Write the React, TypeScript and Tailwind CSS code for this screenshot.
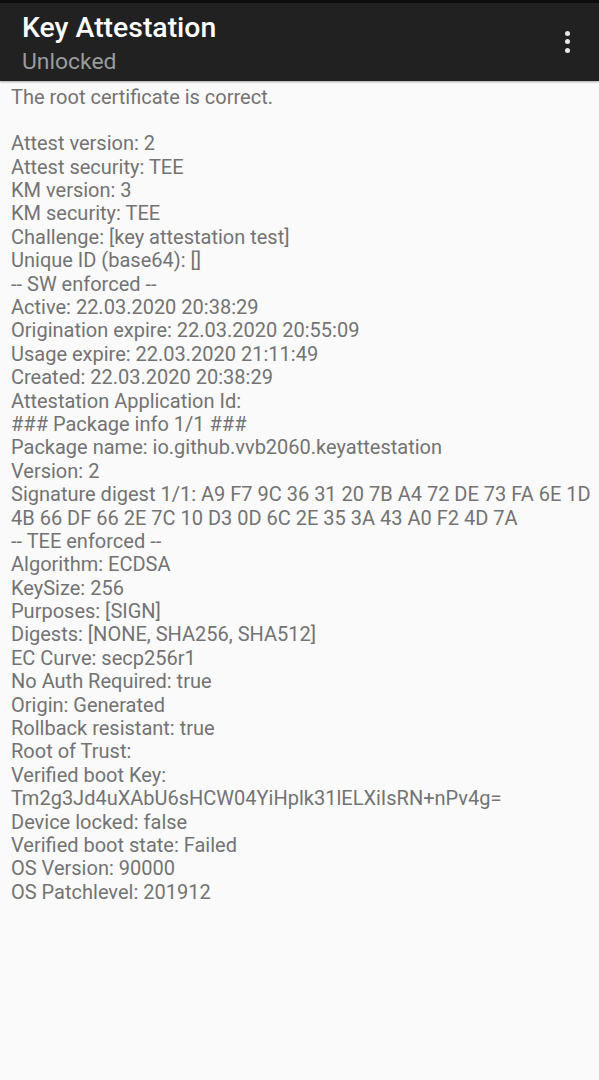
import React from 'react';

const lines: string[] = [
  'The root certificate is correct.',
  '',
  'Attest version: 2',
  'Attest security: TEE',
  'KM version: 3',
  'KM security: TEE',
  'Challenge: [key attestation test]',
  'Unique ID (base64): []',
  '-- SW enforced --',
  'Active: 22.03.2020 20:38:29',
  'Origination expire: 22.03.2020 20:55:09',
  'Usage expire: 22.03.2020 21:11:49',
  'Created: 22.03.2020 20:38:29',
  'Attestation Application Id:',
  '### Package info 1/1 ###',
  'Package name: io.github.vvb2060.keyattestation',
  'Version: 2',
  'Signature digest 1/1: A9 F7 9C 36 31 20 7B A4 72 DE 73 FA 6E 1D',
  '4B 66 DF 66 2E 7C 10 D3 0D 6C 2E 35 3A 43 A0 F2 4D 7A',
  '-- TEE enforced --',
  'Algorithm: ECDSA',
  'KeySize: 256',
  'Purposes: [SIGN]',
  'Digests: [NONE, SHA256, SHA512]',
  'EC Curve: secp256r1',
  'No Auth Required: true',
  'Origin: Generated',
  'Rollback resistant: true',
  'Root of Trust:',
  'Verified boot Key:',
  'Tm2g3Jd4uXAbU6sHCW04YiHplk31lELXiIsRN+nPv4g=',
  'Device locked: false',
  'Verified boot state: Failed',
  'OS Version: 90000',
  'OS Patchlevel: 201912',
];

const App: React.FC = () => {
  return (
    <div className="min-h-[1080px] bg-[#fafafa]" style={{ fontFamily: 'Roboto, "Noto Sans", sans-serif' }}>
      {/* status bar strip */}
      <div className="h-[3px] bg-[#0d0d0d]" />

      {/* toolbar */}
      <div className="relative flex h-[78px] items-start justify-between bg-[#212121] pl-[22px] pr-[29px] shadow-[0_1px_2px_rgba(0,0,0,0.35)]">
        <div className="flex flex-col pt-[8px]">
          <span className="text-[28.4px] font-medium leading-[34px] text-white">Key Attestation</span>
          <span className="mt-[4px] text-[22.9px] leading-[26px] text-[#9b9b9b]">Unlocked</span>
        </div>
        <div className="flex flex-col gap-[3.4px] pt-[28px]">
          <span className="h-[5px] w-[5px] rounded-full bg-[#e8e8e8]" />
          <span className="h-[5px] w-[5px] rounded-full bg-[#e8e8e8]" />
          <span className="h-[5px] w-[5px] rounded-full bg-[#e8e8e8]" />
        </div>
      </div>

      {/* content */}
      <div className="px-[11px] pt-[4.5px] text-[20px] leading-[23.4px] text-[#737373]">
        {lines.map((l, i) => (
          <div key={i} className="h-[23.4px] whitespace-nowrap">
            {l}
          </div>
        ))}
      </div>
    </div>
  );
};

export default App;
